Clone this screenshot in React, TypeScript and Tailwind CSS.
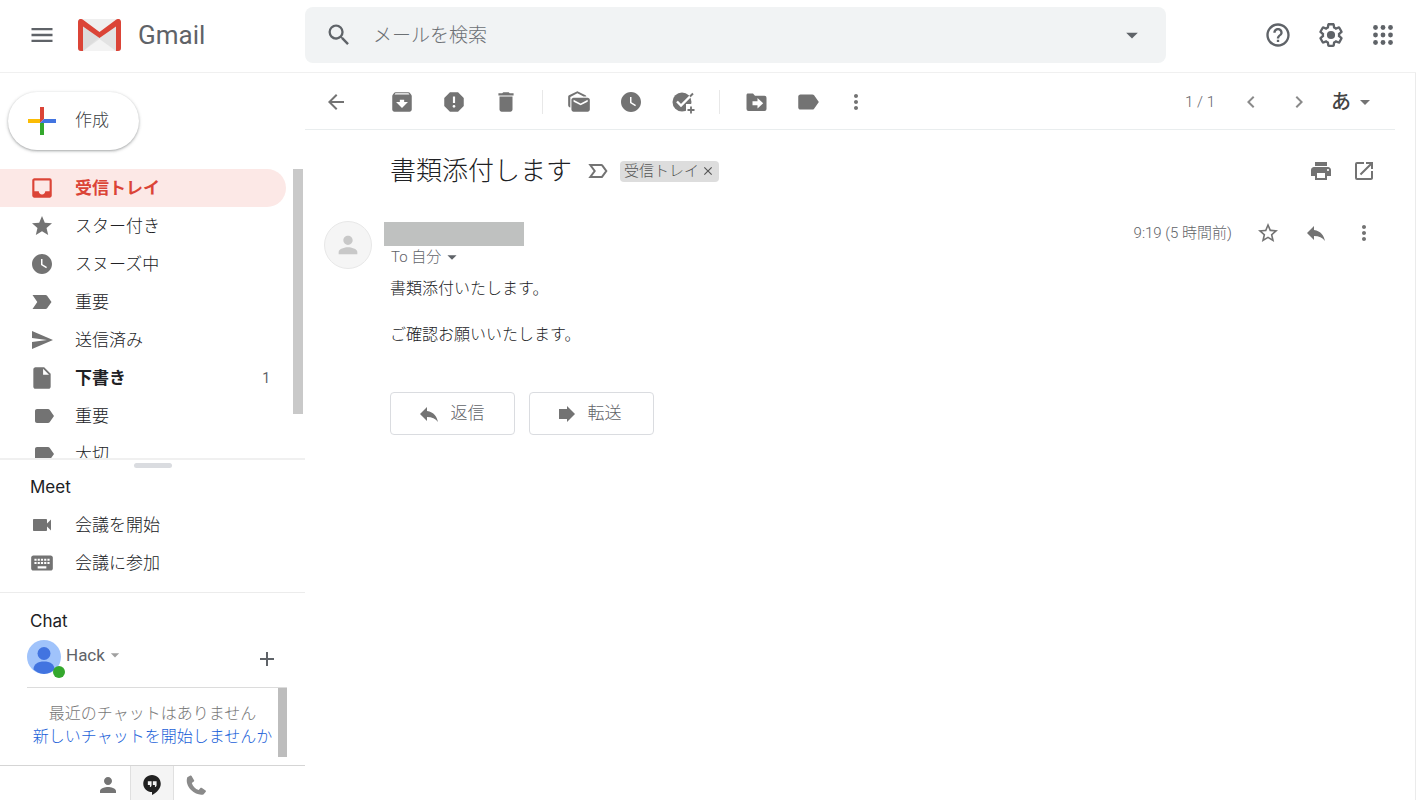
import type { ReactNode } from "react";
import type { IconType } from "react-icons";
import {
    MdAdd,
    MdArchive,
    MdArrowBack,
    MdArrowDropDown,
    MdChevronLeft,
    MdChevronRight,
    MdClose,
    MdDelete,
    MdHelpOutline,
    MdInbox,
    MdInsertDriveFile,
    MdKeyboard,
    MdLabel,
    MdMarkAsUnread,
    MdMenu,
    MdMoreVert,
    MdOpenInNew,
    MdPerson,
    MdPrint,
    MdReply,
    MdReport,
    MdSearch,
    MdSend,
    MdStar,
    MdStarBorder,
    MdVideocam,
    MdWatchLater,
} from "react-icons/md";

/* icons that the md set does not have */

const GmailLogo = () => (
    <svg viewBox="0 0 43 32" className="h-8 w-[43px]" aria-hidden="true">
        <path d="M3 0h37a3 3 0 0 1 3 3v26a3 3 0 0 1-3 3H3a3 3 0 0 1-3-3V3a3 3 0 0 1 3-3z" fill="#e3e3e3" />
        <path d="M5 32 21.5 20 38 32z" fill="#f3f3f3" />
        <path d="M5 8v24L21.500 18z" fill="#dcdcdc" />
        <path d="M3 0h37L21.500 14z" fill="#efefef" />
        <path d="M0 3v26a3 3 0 0 0 3 3h2V7.500L21.500 19 38 7.500V32h2a3 3 0 0 0 3-3V3c0-2.500-2.500-4-4.700-2.400L21.500 13 4.700.6C2.500-1 0 .5 0 3z" fill="#db4437" />
    </svg>
);

const SettingsIcon = () => (
    <svg viewBox="0 0 24 24" className="size-7" aria-hidden="true">
        <path
            fill="currentColor"
            d="M13.850 22.250h-3.700c-.74 0-1.360-.54-1.450-1.270l-.27-1.890c-.27-.14-.53-.29-.79-.46l-1.800.72c-.7.26-1.470-.03-1.810-.65L2.200 15.530c-.35-.66-.2-1.440.36-1.880l1.530-1.190c-.01-.15-.02-.3-.02-.46 0-.15.010-.31.020-.46l-1.520-1.190c-.59-.45-.74-1.260-.37-1.880l1.850-3.190c.34-.62 1.110-.9 1.790-.63l1.810.73c.26-.17.52-.32.78-.46l.27-1.910c.09-.7.71-1.250 1.440-1.250h3.700c.74 0 1.360.54 1.450 1.270l.27 1.890c.27.14.53.29.79.46l1.800-.72c.71-.26 1.480.03 1.820.65l1.840 3.180c.36.66.2 1.440-.36 1.880l-1.520 1.190c.01.15.02.3.02.46s-.01.31-.02.46l1.520 1.190c.56.45.72 1.230.37 1.860l-1.860 3.220c-.34.62-1.110.9-1.800.63l-1.800-.72c-.26.17-.52.32-.78.46l-.27 1.910c-.1.680-.720 1.220-1.460 1.220zm-3.230-2h2.760l.37-2.550.53-.22c.44-.18.88-.44 1.340-.78l.45-.34 2.380.96 1.380-2.400-2.030-1.580.07-.56c.03-.26.06-.51.06-.78s-.03-.53-.06-.78l-.07-.56 2.030-1.580-1.390-2.400-2.390.96-.45-.35c-.42-.32-.87-.58-1.330-.77l-.52-.22-.37-2.550h-2.760l-.37 2.550-.53.21c-.44.19-.88.44-1.340.79l-.45.330-2.380-.95-1.390 2.390 2.030 1.580-.07.56a7 7 0 0 0-.06.790c0 .26.02.53.06.780l.07.56-2.030 1.580 1.380 2.400 2.390-.96.45.35c.43.33.86.58 1.330.77l.53.22.38 2.550z"
        />
        <circle cx="12" cy="12" r="3.500" fill="currentColor" />
    </svg>
);

const AppsIcon = () => (
    <svg viewBox="0 0 20 20" className="size-5" fill="currentColor" aria-hidden="true">
        {[2.5, 10, 17.5].map((y) => [2.5, 10, 17.5].map((x) => <circle key={`${x}-${y}`} cx={x} cy={y} r="2.400" />))}
    </svg>
);

const ComposePlus = () => (
    <svg viewBox="0 0 28 28" className="size-7" aria-hidden="true">
        <path d="M12 0h4v12l-4 4z" fill="#db4437" />
        <path d="M28 12v4H12l4-4z" fill="#4274e0" />
        <path d="M12 16h4v12h-4z" fill="#34a82d" />
        <path d="M0 12h12v4H0z" fill="#fbbc05" />
    </svg>
);

const AddTaskIcon = () => (
    <svg viewBox="0 0 24 24" className="size-6" aria-hidden="true">
        <circle cx="11" cy="12" r="9.500" fill="currentColor" />
        <path d="M15 14h9v9h-9z" fill="#fff" />
        <path d="m6 11.500 4 4L22.500 3" fill="none" stroke="#fff" strokeWidth="2.400" />
        <path d="m19 6.500 3-3" fill="none" stroke="currentColor" strokeWidth="2" />
        <path d="M20 16.500v7M16.500 20h7" fill="none" stroke="currentColor" strokeWidth="1.800" />
    </svg>
);

const MoveToIcon = () => (
    <svg viewBox="0 0 24 24" className="size-6" aria-hidden="true">
        <path d="M4 3.500h5l2 2.200h9.500a2 2 0 0 1 2 2V19a2 2 0 0 1-2 2h-16a2 2 0 0 1-2-2V5.200c0-1 .6-1.700 1.500-1.700z" fill="currentColor" />
        <path d="M8.500 11.300h5V8l5.700 5.300-5.700 5.300v-3.300h-5z" fill="#fff" />
    </svg>
);

const ImportantIcon = ({ className }: { className?: string }) => (
    <svg viewBox="0 0 24 24" className={className} fill="currentColor" aria-hidden="true">
        <path d="M2.500 19h13c.7 0 1.200-.3 1.600-.8L21.500 12l-4.400-6.200c-.4-.5-.9-.8-1.600-.8h-13l4.800 7z" />
    </svg>
);

const ImportantOutlineIcon = () => (
    <svg viewBox="0 0 24 24" className="size-6" fill="none" stroke="currentColor" strokeWidth="2" aria-hidden="true">
        <path d="M4.300 18h11c.4 0 .7-.1.900-.4L20.300 12l-4.100-5.600c-.2-.3-.5-.4-.9-.4h-11l4.400 6z" />
    </svg>
);

const PhoneIcon = () => (
    <svg viewBox="0 0 24 24" className="size-6" fill="currentColor" aria-hidden="true">
        <path d="M6.400 2.600 3.300 4.200c-1.600 4.600.4 9.400 3.800 12.800 3.700 3.600 8.300 5.300 12.300 4.400l2.400-2.700c.3-.4.2-.9-.2-1.200l-4-2.700c-.4-.2-.9-.2-1.200.2l-1.700 2.100c-3.500-1.200-6-4-6.900-7.200l2-1.300c.4-.3.6-.7.400-1.100L7.600 3c-.2-.5-.7-.7-1.200-.4z" />
    </svg>
);

const ForwardIcon = () => (
    <svg viewBox="0 0 18 18" className="size-[18px]" fill="currentColor" aria-hidden="true">
        <path d="M1 4h8V1l8 8-8 8v-3H1z" />
    </svg>
);

const HangoutsIcon = () => (
    <svg viewBox="0 0 24 24" className="size-5" fill="currentColor" aria-hidden="true">
        <path d="M12 0C6.200 0 1.500 4.700 1.500 10.500c0 5.500 5 10 10.500 10V24c6.350-3.100 10.500-8.200 10.500-13.500C22.500 4.700 17.800 0 12 0zm-.5 12c0 1.400-.9 2.500-2 2.500V12H7V7.500h4.500V12zm6 0c0 1.400-.9 2.500-2 2.500V12H13V7.500h4.500V12z" />
    </svg>
);

const ChatAvatar = () => (
    <svg viewBox="0 0 34 34" className="size-[34px]" aria-hidden="true">
        <circle cx="17" cy="17" r="17" fill="#a0c3fb" />
        <circle cx="17" cy="13.500" r="6.500" fill="#4274e0" />
        <path d="M6.500 29.500C6.500 24 11 21.500 17 21.500s10.500 2.500 10.500 8A17 17 0 0 1 17 34a17 17 0 0 1-10.500-4.500z" fill="#4274e0" />
    </svg>
);

const IconButton = ({ label, className = "", children }: { label: string; className?: string; children: ReactNode }) => (
    <button type="button" aria-label={label} className={`flex items-center justify-center ${className}`}>
        {children}
    </button>
);

const Header = () => {
    return (
        <header className="flex h-[73px] shrink-0 items-start border-b border-[#f0f0f0] text-[#5f6368]">
            <div className="flex h-[70px] w-[305px] shrink-0 items-center">
                <IconButton label="メインメニュー" className="ml-7 size-7">
                    <MdMenu className="size-7" />
                </IconButton>
                <a href="#inbox" className="ml-[22px] flex items-center gap-[17px]">
                    <GmailLogo />
                    <span className="text-[26px]">Gmail</span>
                </a>
            </div>
            <form role="search" className="mt-[7px] flex h-14 flex-1 items-center rounded-lg bg-[#f1f3f4] px-5">
                <IconButton label="検索">
                    <MdSearch className="size-7" />
                </IconButton>
                <input
                    type="text"
                    aria-label="メールを検索"
                    placeholder="メールを検索"
                    className="ml-5 min-w-0 flex-1 bg-transparent pt-0.5 text-[19px] font-light outline-none placeholder:text-[#6c7074]"
                />
                <IconButton label="検索オプションを表示">
                    <MdArrowDropDown className="size-7" />
                </IconButton>
            </form>
            <div className="ml-[86px] flex h-[70px] shrink-0 items-center pr-[7px]">
                <IconButton label="サポート" className="w-[52px]">
                    <MdHelpOutline className="size-7" />
                </IconButton>
                <IconButton label="設定" className="w-[53px]">
                    <SettingsIcon />
                </IconButton>
                <IconButton label="Google アプリ" className="w-[52px]">
                    <AppsIcon />
                </IconButton>
            </div>
        </header>
    );
};

type Folder = {
    id: string;
    name: string;
    icon: IconType | typeof ImportantIcon;
    size?: string;
    active?: boolean;
    count?: number;
};

const folders: Folder[] = [
    { id: "inbox", name: "受信トレイ", icon: MdInbox, size: "size-[26px]", active: true },
    { id: "starred", name: "スター付き", icon: MdStar },
    { id: "snoozed", name: "スヌーズ中", icon: MdWatchLater },
    { id: "important", name: "重要", icon: ImportantIcon },
    { id: "sent", name: "送信済み", icon: MdSend },
    { id: "drafts", name: "下書き", icon: MdInsertDriveFile, size: "size-[26px]", count: 1 },
    { id: "label-important", name: "重要", icon: MdLabel, size: "ml-1 size-[26px]" },
    { id: "label-priority", name: "大切", icon: MdLabel, size: "ml-1 size-[26px]" },
];

const FolderRow = ({ folder }: { folder: Folder }) => {
    const Icon = folder.icon;
    let color = "font-light text-[#202124]";
    if (folder.active) color = "rounded-r-full bg-[#fce8e6] font-bold text-[#db4437]";
    else if (folder.count) color = "font-bold text-[#202124]";

    return (
        <a href={`#${folder.id}`} className={`flex h-[38px] items-center pr-4 pl-7 ${color}`}>
            <span className={`flex w-7 shrink-0 justify-center ${folder.active ? "" : "text-[#737373]"}`}>
                <Icon className={folder.size ?? "size-6"} />
            </span>
            <span className="ml-[19px] flex-1 text-[17px] leading-6">{folder.name}</span>
            {folder.count && <span className="text-sm font-normal text-[#5f6368]">{folder.count}</span>}
        </a>
    );
};

const Sidebar = () => {
    return (
        <aside className="flex w-[305px] shrink-0 flex-col">
            <div className="pt-[19px] pb-[19px] pl-2">
                <button
                    type="button"
                    className="flex h-[58px] items-center rounded-full bg-white pr-[30px] pl-5 shadow-[0_1px_2px_rgba(60,64,67,0.3),0_1px_3px_1px_rgba(60,64,67,0.15)]"
                >
                    <ComposePlus />
                    <span className="ml-[19px] text-[17px] font-light text-[#3c4043]">作成</span>
                </button>
            </div>

            {/* folders, cut off by the Meet panel */}
            <div className="flex min-h-0 flex-1 overflow-hidden">
                <nav className="w-[286px]">
                    {folders.map((folder) => (
                        <FolderRow key={folder.id} folder={folder} />
                    ))}
                </nav>
                <div className="ml-[7px] h-[245px] w-2.5 bg-[#c9c9c9]" />
            </div>

            {/* meet */}
            <section className="h-[134px] shrink-0 border-t-2 border-[#f0f0f0]">
                <div className="mx-auto mt-[3px] h-[5px] w-[38px] rounded-full bg-[#dadce0]" />
                <h2 className="mt-[7px] pl-[30px] font-['Inter',sans-serif] text-[17px] leading-6 text-[#202124]">Meet</h2>
                <div className="mt-[7px] text-[17px] leading-6 font-light text-[#202124]">
                    <a href="#meet-start" className="flex h-[38px] items-center pl-7">
                        <span className="flex w-7 justify-center text-[#737373]">
                            <MdVideocam className="size-6" />
                        </span>
                        <span className="ml-[19px]">会議を開始</span>
                    </a>
                    <a href="#meet-join" className="flex h-[38px] items-center pl-7">
                        <span className="flex w-7 justify-center text-[#737373]">
                            <MdKeyboard className="size-[26px]" />
                        </span>
                        <span className="ml-[19px]">会議に参加</span>
                    </a>
                </div>
            </section>

            {/* chat */}
            <section className="shrink-0 border-t border-[#ececec] pt-4">
                <h2 className="pl-[30px] font-['Inter',sans-serif] text-[17px] leading-6 text-[#202124]">Chat</h2>
                <div className="mt-[7px] mr-[18px] ml-[27px] flex h-12 items-start border-b border-[#dcdcdc]">
                    <div className="relative">
                        <ChatAvatar />
                        <span className="absolute -right-1 -bottom-1 size-3 rounded-full bg-[#34a82d]" />
                    </div>
                    <button type="button" className="ml-[5px] flex items-center pt-[3px] text-[17px] leading-6 text-[#5f6368]">
                        Hack
                        <MdArrowDropDown className="size-5 text-[#a0a0a0]" />
                    </button>
                    <IconButton label="新しいチャット" className="mt-[7px] mr-2 ml-auto text-[#5f6368]">
                        <MdAdd className="size-6" />
                    </IconButton>
                </div>
                <div className="mr-[18px] ml-[27px] flex h-[69px]">
                    <div className="flex-1 pt-[14px] text-center text-base leading-[23px] font-light whitespace-nowrap text-[#777777]">
                        <p>最近のチャットはありません</p>
                        <a href="#new-chat" className="text-[#1a5fd8]">
                            新しいチャットを開始しませんか
                        </a>
                    </div>
                    <div className="w-[9px] bg-[#bdbdbd]" />
                </div>
            </section>

            <div className="mt-2 flex h-[35px] shrink-0 justify-center border-t border-[#d5d5d5] pr-0.5 text-[#757575]">
                <IconButton label="連絡先" className="w-11 pt-1">
                    <MdPerson className="size-6" />
                </IconButton>
                <IconButton label="ハングアウト" className="w-11 border-x border-[#e0e0e0] bg-[#f4f4f4] pt-1 text-[#212121]">
                    <HangoutsIcon />
                </IconButton>
                <IconButton label="電話" className="w-11 pt-1 text-[#8a8a8a]">
                    <PhoneIcon />
                </IconButton>
            </div>
        </aside>
    );
};

const Divider = () => <div className="mx-2.5 h-6 w-px bg-[#e8e8e8]" />;

const Toolbar = () => {
    return (
        <div className="mr-5 flex h-[57px] items-center border-b border-[#e9edee] pt-0.5 text-[#737373]">
            <IconButton label="受信トレイに戻る" className="mr-[14px] ml-[5px] w-[52px]">
                <MdArrowBack className="size-6" />
            </IconButton>
            <IconButton label="アーカイブ" className="w-[52px]">
                <MdArchive className="size-[26px]" />
            </IconButton>
            <IconButton label="迷惑メールを報告" className="w-[52px]">
                <MdReport className="size-[26px]" />
            </IconButton>
            <IconButton label="削除" className="w-[52px]">
                <MdDelete className="size-[26px]" />
            </IconButton>
            <Divider />
            <IconButton label="未読にする" className="w-[52px]">
                <MdMarkAsUnread className="size-[26px]" />
            </IconButton>
            <IconButton label="スヌーズ" className="w-[52px]">
                <MdWatchLater className="size-6" />
            </IconButton>
            <IconButton label="ToDo リストに追加" className="w-[52px]">
                <AddTaskIcon />
            </IconButton>
            <Divider />
            <IconButton label="移動" className="w-[52px]">
                <MoveToIcon />
            </IconButton>
            <IconButton label="ラベル" className="w-[52px]">
                <MdLabel className="size-[26px]" />
            </IconButton>
            <IconButton label="その他" className="w-11">
                <MdMoreVert className="size-6" />
            </IconButton>

            <span className="ml-auto text-[15px] font-light text-[#5f6368]">1 / 1</span>
            <IconButton label="新しい" className="ml-3 w-12 text-[#8a8a8a]">
                <MdChevronLeft className="size-6" />
            </IconButton>
            <IconButton label="古い" className="w-12 text-[#8a8a8a]">
                <MdChevronRight className="size-6" />
            </IconButton>
            <button type="button" aria-label="入力ツール" className="mr-[18px] ml-2 flex items-center">
                <span className="text-xl font-medium text-[#444444]">あ</span>
                <MdArrowDropDown className="ml-0.5 size-6" />
            </button>
        </div>
    );
};

const Message = () => {
    return (
        <article className="text-[#202124]">
            <div className="flex items-center pt-[21px] pr-[30px] pl-[85px]">
                <h1 className="text-[26px] leading-10 font-light">書類添付します</h1>
                <span className="ml-[14px] text-[#737373]">
                    <ImportantOutlineIcon />
                </span>
                <span className="ml-2.5 flex h-[21px] items-center rounded bg-[#dddddd] px-1 text-[15px] leading-5 font-light text-[#555555]">
                    受信トレイ
                    <button type="button" aria-label="受信トレイ ラベルを削除" className="ml-0.5">
                        <MdClose className="size-[14px]" />
                    </button>
                </span>
                <div className="ml-auto flex text-[#737373]">
                    <IconButton label="すべて印刷" className="w-[43px]">
                        <MdPrint className="size-6" />
                    </IconButton>
                    <IconButton label="新しいウィンドウで開く" className="w-[43px]">
                        <MdOpenInNew className="size-6" />
                    </IconButton>
                </div>
            </div>

            <div className="flex items-start pt-[30px] pr-[27px] pl-[19px]">
                <div className="flex size-12 shrink-0 items-center justify-center rounded-full border border-[#e8e8e8] bg-[#f5f5f5] text-[#c8c8c8]">
                    <MdPerson className="size-7" />
                </div>
                <div className="ml-3">
                    {/* sender name is hidden */}
                    <div className="mt-px h-6 w-[140px] bg-[#bfc1c0]" />
                    <button type="button" className="flex items-center pl-[7px] text-[15px] leading-[21px] font-light text-[#5f6368]">
                        To 自分
                        <MdArrowDropDown className="size-[22px]" />
                    </button>
                </div>
                <div className="ml-auto flex items-center text-[#737373]">
                    <time className="mr-3 text-[15px] leading-6 font-light text-[#5f6368]">9:19 (5 時間前)</time>
                    <IconButton label="スター" className="w-12">
                        <MdStarBorder className="size-6" />
                    </IconButton>
                    <IconButton label="返信" className="w-12">
                        <MdReply className="size-6" />
                    </IconButton>
                    <IconButton label="その他" className="w-12">
                        <MdMoreVert className="size-6" />
                    </IconButton>
                </div>
            </div>

            <div className="pt-2 pl-[85px]">
                <div className="text-base leading-[23px] font-light">
                    <p>書類添付いたします。</p>
                    <p className="mt-[23px]">ご確認お願いいたします。</p>
                </div>
                <div className="mt-[46px] flex gap-[14px] text-[17px] font-light text-[#5f6368]">
                    <button type="button" className="flex h-[43px] w-[125px] items-center justify-center gap-2.5 rounded border border-[#dadce0] pr-1">
                        <MdReply className="size-6 text-[#737373]" />
                        返信
                    </button>
                    <button type="button" className="flex h-[43px] w-[125px] items-center justify-center gap-3 rounded border border-[#dadce0] pr-1">
                        <span className="text-[#737373]">
                            <ForwardIcon />
                        </span>
                        転送
                    </button>
                </div>
            </div>
        </article>
    );
};

export default function App() {
    return (
        <div className="flex h-screen flex-col overflow-hidden bg-white font-['Roboto','Noto_Sans_CJK_JP',sans-serif]" lang="ja">
            <Header />
            <div className="flex min-h-0 flex-1">
                <Sidebar />
                <main className="min-w-0 flex-1 border-r border-[#ebebeb]">
                    <Toolbar />
                    <Message />
                </main>
            </div>
        </div>
    );
}
